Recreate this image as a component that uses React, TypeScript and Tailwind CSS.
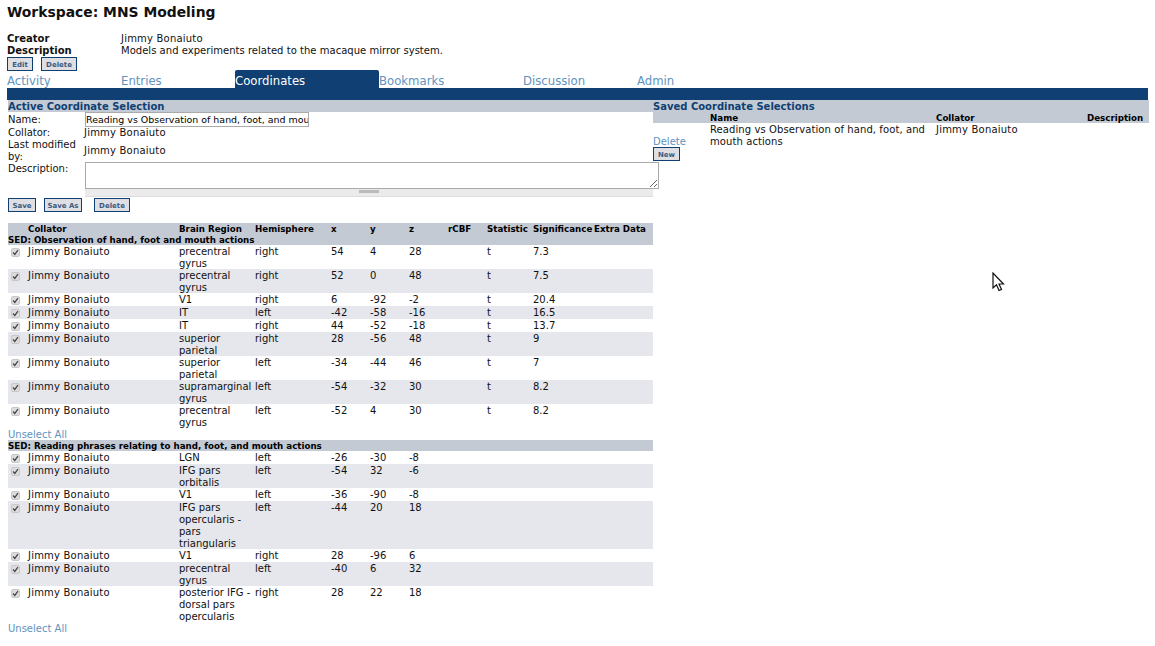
import type { ReactNode } from "react";

type Row = { region: string; hemi: string; x: number; y: number; z: number; stat?: string; sig?: string };

const observation: Row[] = [
  { region: "precentral gyrus", hemi: "right", x: 54, y: 4, z: 28, stat: "t", sig: "7.3" },
  { region: "precentral gyrus", hemi: "right", x: 52, y: 0, z: 48, stat: "t", sig: "7.5" },
  { region: "V1", hemi: "right", x: 6, y: -92, z: -2, stat: "t", sig: "20.4" },
  { region: "IT", hemi: "left", x: -42, y: -58, z: -16, stat: "t", sig: "16.5" },
  { region: "IT", hemi: "right", x: 44, y: -52, z: -18, stat: "t", sig: "13.7" },
  { region: "superior parietal", hemi: "right", x: 28, y: -56, z: 48, stat: "t", sig: "9" },
  { region: "superior parietal", hemi: "left", x: -34, y: -44, z: 46, stat: "t", sig: "7" },
  { region: "supramarginal gyrus", hemi: "left", x: -54, y: -32, z: 30, stat: "t", sig: "8.2" },
  { region: "precentral gyrus", hemi: "left", x: -52, y: 4, z: 30, stat: "t", sig: "8.2" },
];

const reading: Row[] = [
  { region: "LGN", hemi: "left", x: -26, y: -30, z: -8 },
  { region: "IFG pars orbitalis", hemi: "left", x: -54, y: 32, z: -6 },
  { region: "V1", hemi: "left", x: -36, y: -90, z: -8 },
  { region: "IFG pars opercularis - pars triangularis", hemi: "left", x: -44, y: 20, z: 18 },
  { region: "V1", hemi: "right", x: 28, y: -96, z: 6 },
  { region: "precentral gyrus", hemi: "left", x: -40, y: 6, z: 32 },
  { region: "posterior IFG - dorsal pars opercularis", hemi: "right", x: 28, y: 22, z: 18 },
];

const tabs = [
  { label: "Activity", w: "w-[114px]" },
  { label: "Entries", w: "w-[114px]" },
  { label: "Coordinates", w: "w-[144px]", active: true },
  { label: "Bookmarks", w: "w-[144px]" },
  { label: "Discussion", w: "w-[114px]" },
  { label: "Admin", w: "w-[114px]" },
];

function Btn({ children, className = "" }: { children: ReactNode; className?: string }) {
  return (
    <button className={`h-[14px] border border-[#0f3f73] bg-[#dfdfe3] pt-[1px] text-[7px] font-bold leading-[10px] text-[#3b5a80] ${className}`}>
      {children}
    </button>
  );
}

function Check() {
  return (
    <span className="ml-[3px] mt-[3px] flex h-[9px] w-[9px] items-center justify-center rounded-[2px] border border-[#c8c8c8] bg-[#dcdcdc]">
      <svg viewBox="0 0 8 8" className="h-[7px] w-[7px]">
        <path d="M1.2 4 L3.2 6.2 L6.8 1.2" fill="none" stroke="#444" strokeWidth="1.4" />
      </svg>
    </span>
  );
}

function Cols() {
  return (
    <colgroup>
      <col className="w-[20px]" />
      <col className="w-[151px]" />
      <col className="w-[76px]" />
      <col className="w-[76px]" />
      <col className="w-[39px]" />
      <col className="w-[39px]" />
      <col className="w-[39px]" />
      <col className="w-[39px]" />
      <col className="w-[46px]" />
      <col className="w-[61px]" />
      <col />
    </colgroup>
  );
}

// body text sits 1px lower in its 12px line than the browser puts it here
function Cell({ children, className = "" }: { children?: ReactNode; className?: string }) {
  return (
    <td>
      <div className={`-mb-[1px] pt-[1px] ${className}`}>{children}</div>
    </td>
  );
}

function DataRows({ rows }: { rows: Row[] }) {
  return (
    <>
      {rows.map((r, i) => (
        <tr key={i} className={i % 2 ? "bg-[#e6e7ec]" : ""}>
          <td className="h-[13px]"><Check /></td>
          <Cell className="tracking-[0.2px]">Jimmy Bonaiuto</Cell>
          <Cell>{r.region}</Cell>
          <Cell>{r.hemi}</Cell>
          <Cell>{r.x}</Cell>
          <Cell>{r.y}</Cell>
          <Cell>{r.z}</Cell>
          <td />
          <Cell>{r.stat}</Cell>
          <Cell>{r.sig}</Cell>
          <td />
        </tr>
      ))}
    </>
  );
}

function Cursor() {
  return (
    <svg viewBox="0 0 13 21" className="absolute left-[992px] top-[272px] h-[21px] w-[13px]">
      <path d="M1 1 L1 16 L4.5 12.8 L7 18.5 L9.5 17.5 L7 12 L11.5 12 Z" fill="#fff" stroke="#111" strokeWidth="1.2" strokeLinejoin="miter" />
    </svg>
  );
}

export default function App() {
  return (
    <div className="relative h-[646px] w-[1155px] overflow-hidden bg-white font-['DejaVu_Sans',sans-serif] text-[10px] leading-[12px] text-[#111]">
      <h1 className="pb-[1px] pl-[7px] pt-[3px] text-[13.9px] font-bold leading-[18px]">Workspace: MNS Modeling</h1>

      <div className="mt-[11px] grid grid-cols-[114px_1fr] pl-[7px]">
        <b>Creator</b>
        <span className="tracking-[0.2px]">Jimmy Bonaiuto</span>
        <b>Description</b>
        <span className="tracking-[0.03px]">Models and experiments related to the macaque mirror system.</span>
      </div>
      <div className="flex gap-[8px] pl-[7px]">
        <Btn className="w-[26px]">Edit</Btn>
        <Btn className="w-[36px]">Delete</Btn>
      </div>

      <div className="-mt-[1px] flex h-[18px] pl-[7px] text-[11.7px] leading-[22px] text-[#5f93c0]">
        {tabs.map((t) => (
          <a key={t.label} className={`${t.w} ${t.active ? "rounded-t-[2px] bg-[#0f3f73] text-white" : ""}`}>
            {t.label}
          </a>
        ))}
      </div>
      <div className="ml-[7px] h-[12px] w-[1141px] bg-[#0f3f73]" />

      <div className="flex pl-[8px]">
        <section className="w-[645px]">
          <h2 className="bg-[#c3cad4] pt-[1px] font-bold leading-[11px] text-[#0f3f73]">Active Coordinate Selection</h2>
          <div className="grid grid-cols-[77px_1fr] items-center">
            <span className="-mb-[1px] self-start pt-[2px]">Name:</span>
            <input
              readOnly
              value="Reading vs Observation of hand, foot, and mouth actions"
              className="-mb-[1px] h-[15px] w-[224px] border border-[#aaa] text-[9.45px] text-black outline-none"
            />
            <span className="-mb-[1px] pt-[1px]">Collator:</span>
            <span className="-mb-[1px] -ml-[1px] pt-[1px] tracking-[0.2px]">Jimmy Bonaiuto</span>
            <span className="-mb-[1px] pt-[1px]">Last modified by:</span>
            <span className="-mb-[1px] -ml-[1px] pt-[1px] tracking-[0.2px]">Jimmy Bonaiuto</span>
            <span className="self-start pt-[1px]">Description:</span>
            <div>
              <textarea readOnly className="block h-[27px] w-[574px] border border-[#aaa] outline-none" />
              <div className="flex h-[8px] w-[568px] justify-center border-b border-[#ddd] bg-[#ebebeb] pt-[1px]">
                <span className="h-[3px] w-[20px] bg-[#bbb]" />
              </div>
            </div>
          </div>
          <div className="mt-[1px] flex">
            <Btn className="w-[28px]">Save</Btn>
            <Btn className="ml-[8px] w-[38px]">Save As</Btn>
            <Btn className="ml-[12px] w-[36px]">Delete</Btn>
          </div>

          <table className="mt-[11px] w-[645px] table-fixed border-collapse [&_td]:p-0 [&_td]:align-top [&_th]:p-0 [&_th]:pt-[1px]">
            <Cols />
            <thead className="bg-[#c3cad4] text-left text-[8.7px] font-bold leading-[10px] text-black">
              <tr>
                <th />
                <th>Collator</th>
                <th>Brain Region</th>
                <th>Hemisphere</th>
                <th>x</th>
                <th>y</th>
                <th>z</th>
                <th>rCBF</th>
                <th>Statistic</th>
                <th className="whitespace-nowrap">Significance</th>
                <th className="whitespace-nowrap">Extra Data</th>
              </tr>
              <tr>
                <th colSpan={11}>SED: Observation of hand, foot and mouth actions</th>
              </tr>
            </thead>
            <tbody>
              <DataRows rows={observation} />
            </tbody>
          </table>
          <a className="-mb-[1px] block pt-[1px] text-[#5f93c0]">Unselect All</a>

          <table className="w-[645px] table-fixed border-collapse [&_td]:p-0 [&_td]:align-top [&_th]:p-0 [&_th]:pt-[1px]">
            <Cols />
            <thead className="bg-[#c3cad4] text-left text-[8.7px] font-bold leading-[10px] text-black">
              <tr>
                <th colSpan={11}>SED: Reading phrases relating to hand, foot, and mouth actions</th>
              </tr>
            </thead>
            <tbody>
              <DataRows rows={reading} />
            </tbody>
          </table>
          <a className="block pt-[1px] text-[#5f93c0]">Unselect All</a>
        </section>

        <section className="w-[496px]">
          <div className="bg-[#c3cad4]">
            <h2 className="pt-[1px] font-bold leading-[11px] text-[#0f3f73]">Saved Coordinate Selections</h2>
            <div className="grid grid-cols-[57px_226px_151px_1fr] pt-[1px] text-[8.7px] font-bold leading-[10px] text-black">
              <span />
              <span>Name</span>
              <span>Collator</span>
              <span>Description</span>
            </div>
          </div>
          <div className="-mb-[1px] grid grid-cols-[57px_226px_151px_1fr] pt-[1px]">
            <a className="self-end text-[#5f93c0]">Delete</a>
            <span className="pr-[6px] tracking-[0.09px]">Reading vs Observation of hand, foot, and mouth actions</span>
            <span className="tracking-[0.2px]">Jimmy Bonaiuto</span>
          </div>
          <Btn className="block w-[27px]">New</Btn>
        </section>
      </div>

      <Cursor />
    </div>
  );
}
